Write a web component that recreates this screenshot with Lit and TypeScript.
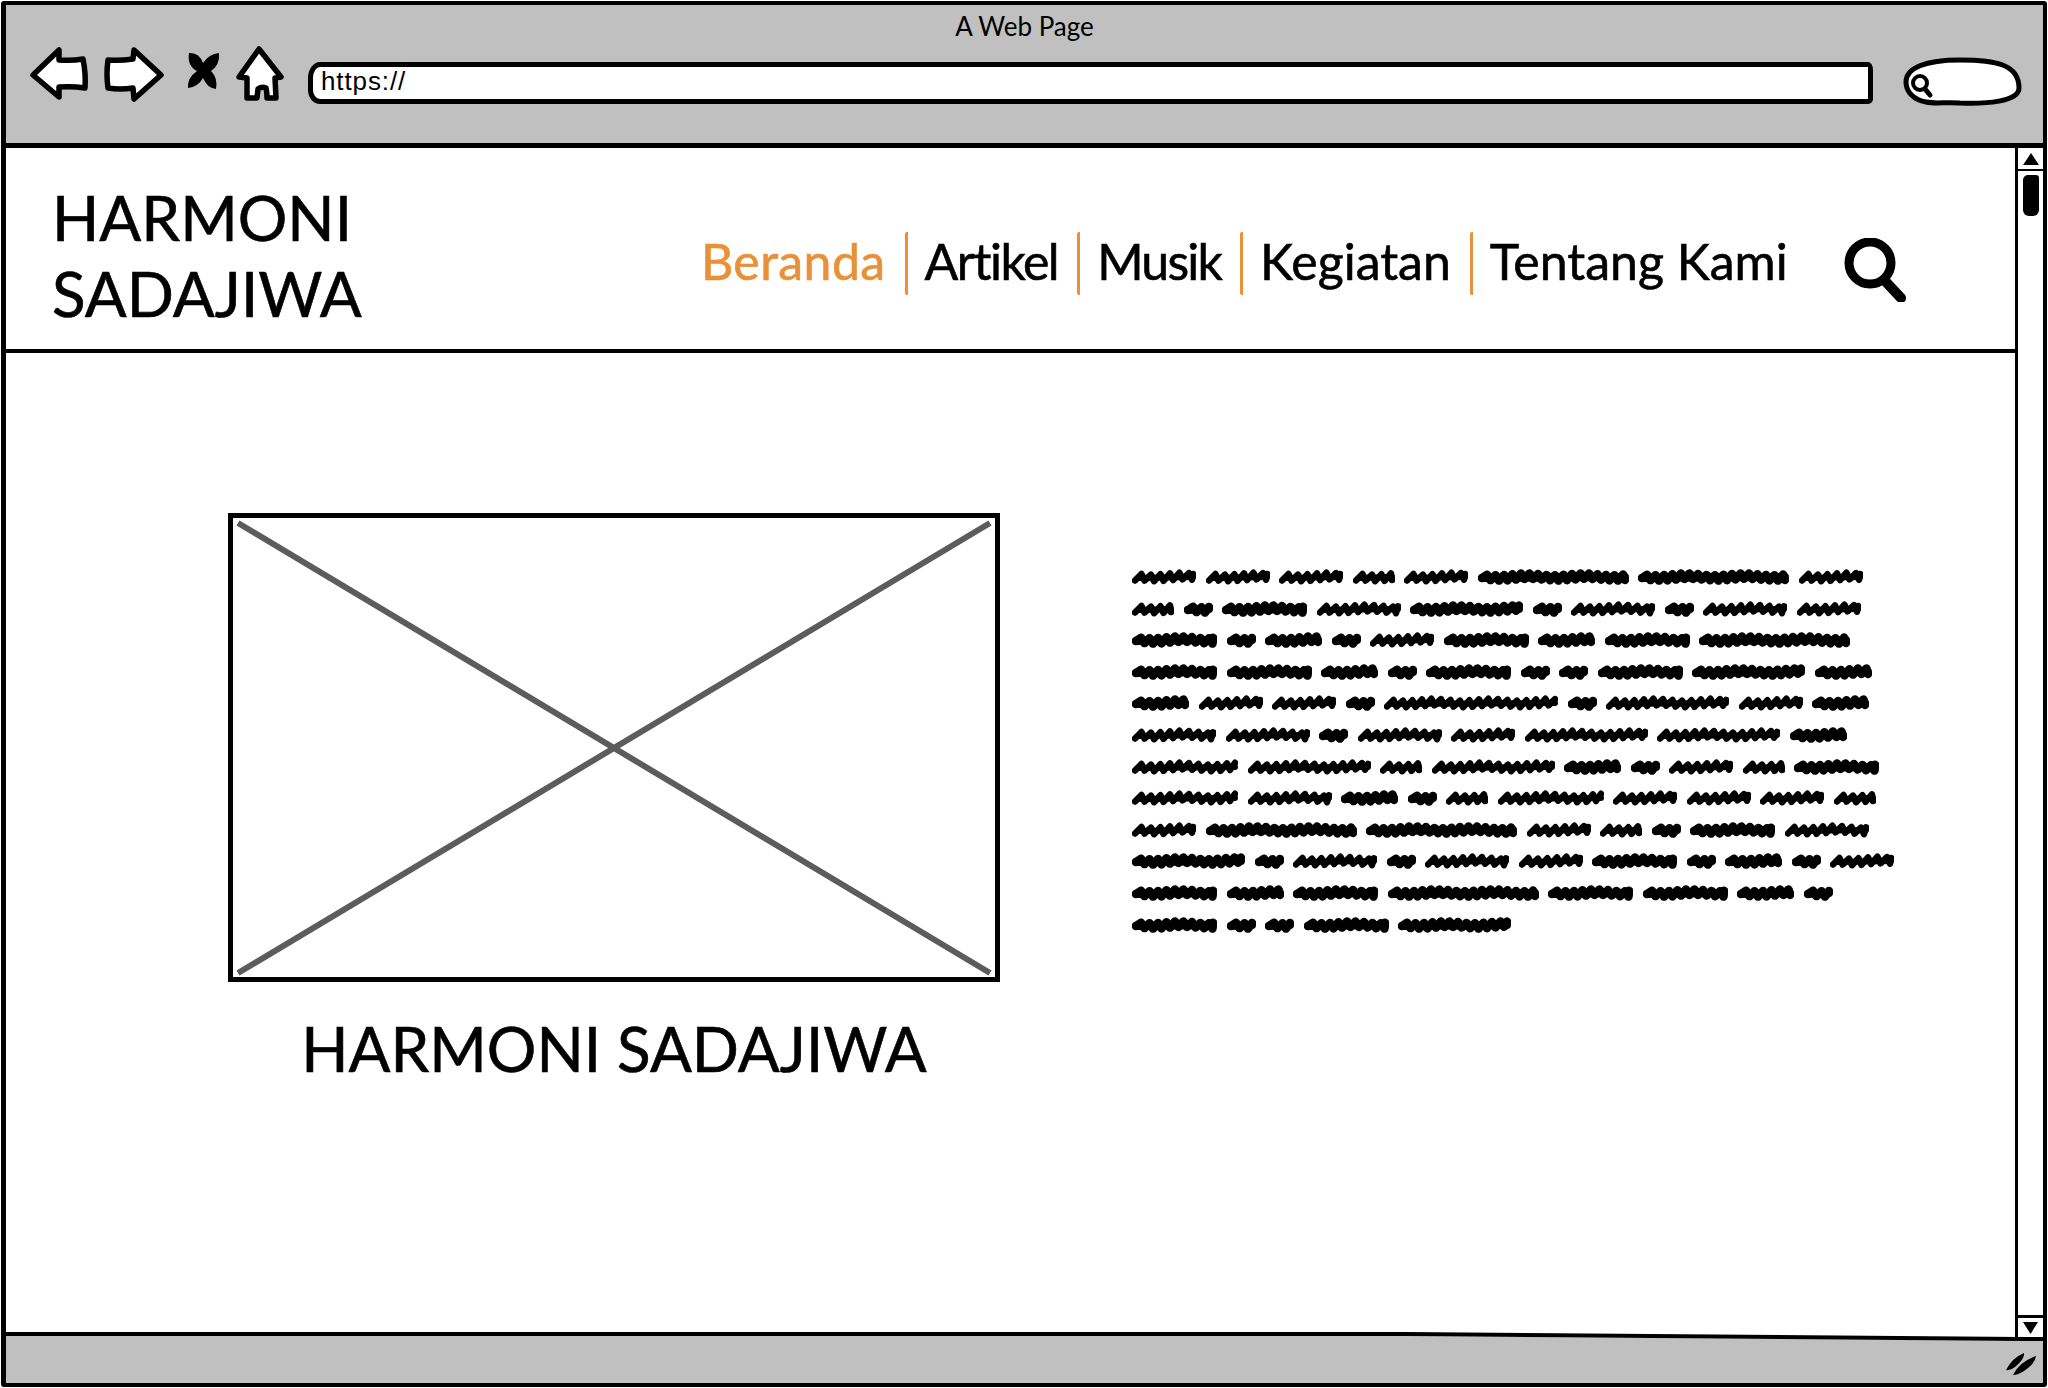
import { LitElement, html, css, svg } from 'lit';
import { customElement } from 'lit/decorators.js';

// scribble word kinds: [width, dense]
const KINDS: Record<string, [number, boolean]> = {
  a: [64, false],
  b: [42, false],
  c: [29, true],
  d: [85, true],
  e: [84, false],
  f: [57, true],
  g: [113, true],
  h: [151, true],
  i: [174, false],
  j: [123, false],
  k: [106, false],
};

const LINES = [
  'a a a b a h h a',
  'b c d e g c e c e a',
  'd c f c a d f d h',
  'd d f c d c c d g f',
  'f a a c i c j a f',
  'e e c e a j j f',
  'k j b j f c a b d',
  'k e f c b k a a a b',
  'a h h a b c d e',
  'g c e c e a d c f c a',
  'd f d h d d f c',
  'd c c d g',
];

function scribble(kind: string) {
  const [w, dense] = KINDS[kind];
  const rise = dense ? 5 : 6.5;
  const fall = dense ? 3.5 : 3;
  const amp = dense ? 2.2 : 2.8;
  const pts: string[] = [];
  let x = dense ? 4 : 3;
  const end = w - (dense ? 4 : 3);
  pts.push(`M${x} ${dense ? 9 : 11.5}`);
  while (x < end) {
    const bob = Math.sin(x * 0.11) * 0.9;
    x = Math.min(x + rise, end);
    pts.push(`L${x.toFixed(1)} ${(7.5 + bob - amp).toFixed(1)}`);
    if (x >= end) break;
    x = Math.min(x + fall, end);
    pts.push(`L${x.toFixed(1)} ${(8.5 + bob + amp).toFixed(1)}`);
  }
  const base = `M${dense ? 4 : 8} 9 L${end} 8`;
  return html`<svg class="word" width=${w} height="16" viewBox="0 0 ${w} 16">
    ${svg`<path d=${pts.join(' ')} fill="none" stroke="#000" stroke-width=${dense ? 8.5 : 6.5} stroke-linecap="round" stroke-linejoin="round"/>
    <path d=${base} fill="none" stroke="#000" stroke-width=${dense ? 8 : 6} stroke-linecap="round"/>`}
  </svg>`;
}

@customElement('app-root')
export class AppRoot extends LitElement {
  static styles = css`
    :host {
      display: block;
      width: 2048px;
      height: 1388px;
      padding: 1px;
      box-sizing: border-box;
      font-family: 'Lato', 'Noto Sans', sans-serif;
      color: #000;
      background: #fff;
      font-variant-ligatures: none;
    }
    .frame {
      height: 100%;
      box-sizing: border-box;
      border: 4px solid #000;
      border-left-width: 5px;
      display: flex;
      flex-direction: column;
      border-radius: 3px;
    }
    .bar {
      height: 143px;
      box-sizing: border-box;
      flex: none;
      background: #c0c0c0;
      border-bottom: 5px solid #000;
      padding-top: 6px;
    }
    .title {
      font-size: 26px;
      line-height: 30px;
      text-align: center;
      margin-bottom: 3px;
    }
    .tools {
      height: 74px;
      display: flex;
      align-items: center;
      padding: 0 21px 0 22px;
    }
    .tools svg {
      flex: none;
      height: 74px;
    }
    .back { margin-right: 13px; }
    .forward { margin-right: 20px; }
    .stop { margin-right: 14px; }
    .home { margin-right: 23px; }
    .url {
      flex: 1;
      height: 42px;
      align-self: flex-start;
      margin-top: 18px;
      box-sizing: border-box;
      background: #fff;
      border: 5px solid #000;
      border-radius: 12px 5px 5px 12px / 16px 8px 5px 14px;
      margin-right: 30px;
      padding-left: 8px;
      font-family: 'Liberation Sans', Arial, sans-serif;
      font-size: 26px;
      letter-spacing: 0.9px;
      line-height: 28px;
    }
    .content {
      flex: 1;
      display: flex;
      min-height: 0;
    }
    .main {
      flex: 1;
      min-width: 0;
    }
    .header {
      height: 205px;
      box-sizing: border-box;
      border-bottom: 4px solid #000;
      display: flex;
      align-items: flex-start;
    }
    .brand {
      width: 695px;
      box-sizing: border-box;
      padding: 31px 0 0 46px;
      font-size: 62px;
      line-height: 76px;
      flex: none;
      -webkit-text-stroke: 0.6px #000;
    }
    .nav {
      display: flex;
      margin-top: 84px;
      height: 63px;
      font-size: 50px;
      line-height: 58px;
      flex: none;
      -webkit-text-stroke: 0.6px currentColor;
    }
    .nav a {
      display: block;
      padding: 0 19px 0 17px;
      border-left: 3px solid #e99138;
      border-radius: 2px;
    }
    .nav a:first-child {
      border-left: none;
      padding-left: 0;
    }
    .nav a.active {
      color: #e99138;
      letter-spacing: 0.4px;
    }
    .nav a.artikel { letter-spacing: -1.5px; }
    .nav a.musik { letter-spacing: -1.8px; }
    .find {
      flex: none;
      margin: 90px 0 0 37px;
    }
    .body {
      display: flex;
      align-items: flex-start;
      padding: 160px 0 0 222px;
    }
    .figure {
      width: 772px;
      flex: none;
      text-align: center;
    }
    .placeholder {
      display: block;
      width: 772px;
      height: 469px;
    }
    .caption {
      margin-top: 28px;
      font-size: 62px;
      line-height: 76px;
      -webkit-text-stroke: 0.6px #000;
    }
    .para {
      margin: 56px 0 0 132px;
      display: flex;
      flex-direction: column;
      gap: 15.6px;
    }
    .line {
      display: flex;
      gap: 9.5px;
      height: 16px;
    }
    .word { flex: none; }
    .scroll {
      width: 28px;
      flex: none;
      box-sizing: border-box;
      border-left: 3px solid #000;
      display: flex;
      flex-direction: column;
      align-items: center;
    }
    .scroll-btn {
      width: 100%;
      height: 21px;
      flex: none;
      display: flex;
      align-items: center;
      justify-content: center;
    }
    .scroll-btn.up { border-bottom: 2px solid #000; }
    .scroll-btn.down {
      border-top: 3px solid #000;
      height: 22px;
      box-sizing: border-box;
      margin-top: auto;
      margin-bottom: -5px;
      position: relative;
      z-index: 1;
      background: #fff;
    }
    .thumb {
      width: 16px;
      height: 41px;
      margin-top: 4px;
      background: #000;
      border-radius: 5px 3px 6px 6px;
    }
    .rule {
      display: block;
      flex: none;
    }
    .status {
      flex: none;
      height: 42px;
      background: #c0c0c0;
      display: flex;
      justify-content: flex-end;
      align-items: flex-start;
      padding: 11px 5px 0 0;
      box-sizing: border-box;
    }
  `;

  render() {
    return html`
      <div class="frame">
        <div class="bar">
          <div class="title">A Web Page</div>
          <div class="tools">
            <svg class="back" width="62" viewBox="28 44 62 74">
              <path d="M33 75 L59 50 L59 60 Q72 61 83 59 Q86 74 85 88 Q72 86 59 87 L59 97 Z" fill="#fff" stroke="#000" stroke-width="5.5" stroke-linejoin="round"/>
            </svg>
            <svg class="forward" width="63" viewBox="103 44 63 74">
              <path d="M108 60 Q120 61 133 59 L134 50 L161 75 L134 99 L133 88 Q120 90 108 88 Q106 74 108 60 Z" fill="#fff" stroke="#000" stroke-width="5.5" stroke-linejoin="round"/>
            </svg>
            <svg class="stop" width="35" viewBox="186 44 35 74">
              <path d="M189 53 Q199 52 203 63 Q209 54 219 53 Q220 65 211 71 Q218 78 216 89 Q207 88 203 78 Q198 87 188 88 Q187 78 197 71 Q187 66 189 53 Z" fill="#000"/>
            </svg>
            <svg class="home" width="50" viewBox="235 44 50 74">
              <path d="M259 49 L281 77 L275 78 L276 98 L267 98 Q267 92 266 88 Q262 86 258 89 L257 98 L247 98 L247 78 L239 77 Z" fill="#fff" stroke="#000" stroke-width="5.5" stroke-linejoin="round"/>
            </svg>
            <div class="url">https://</div>
            <svg width="119" viewBox="1903 44 119 74">
              <path d="M1906 82 C1906 68 1925 60 1960 60 C1995 60 2019 64 2019 88 C2019 102 1985 104 1960 103 C1945 102 1935 104 1926 102 C1914 100 1906 92 1906 82 Z" fill="#fff" stroke="#000" stroke-width="5"/>
              <circle cx="1920" cy="83" r="7" fill="none" stroke="#000" stroke-width="4"/>
              <path d="M1925 89 L1930 95" stroke="#000" stroke-width="5" stroke-linecap="round"/>
            </svg>
          </div>
        </div>
        <div class="content">
          <div class="main">
            <div class="header">
              <div class="brand">HARMONI<br />SADAJIWA</div>
              <nav class="nav">
                <a class="active">Beranda</a>
                <a class="artikel">Artikel</a>
                <a class="musik">Musik</a>
                <a>Kegiatan</a>
                <a>Tentang Kami</a>
              </nav>
              <svg class="find" width="64" height="64" viewBox="0 0 64 64">
                <circle cx="26" cy="25" r="21" fill="none" stroke="#000" stroke-width="9"/>
                <path d="M42 44 L57 60" stroke="#000" stroke-width="10" stroke-linecap="round"/>
              </svg>
            </div>
            <div class="body">
              <div class="figure">
                <svg class="placeholder" viewBox="0 0 772 469">
                  <rect x="2.5" y="2.5" width="767" height="464" fill="#fff" stroke="#000" stroke-width="5"/>
                  <path d="M10 10 L762 460 M762 10 L10 460" stroke="#5c5c5c" stroke-width="6"/>
                </svg>
                <div class="caption">HARMONI SADAJIWA</div>
              </div>
              <div class="para">
                ${LINES.map(
                  (l) => html`<div class="line">${l.split(' ').map((k) => scribble(k))}</div>`,
                )}
              </div>
            </div>
          </div>
          <div class="scroll">
            <div class="scroll-btn up">
              <svg width="16" height="12" viewBox="0 0 16 12"><path d="M8 0 L16 12 L0 12 Z" fill="#000"/></svg>
            </div>
            <div class="thumb"></div>
            <div class="scroll-btn down">
              <svg width="15" height="12" viewBox="0 0 15 12"><path d="M0 0 L15 0 L7.5 12 Z" fill="#000"/></svg>
            </div>
          </div>
        </div>
        <svg class="rule" width="2037" height="9" viewBox="0 0 2037 9">
          <rect width="2037" height="9" fill="#fff"/>
          <path d="M0 4 L1400 4 L2037 9 L0 9 Z" fill="#c0c0c0"/>
          <path d="M2009 0 L2012 0 L2012 8 L2009 8 Z" fill="#000"/>
          <path d="M0 2 L1400 2 L2015 7 L2037 7" fill="none" stroke="#000" stroke-width="4"/>
        </svg>
        <div class="status">
          <svg width="34" height="26" viewBox="0 0 34 26">
            <path d="M2 18 Q8 6 20 1 Q21 7 11 15 Q6 19 2 18 Z M9 23 Q15 10 32 4 Q31 12 20 19 Q14 23 9 23 Z" fill="#000"/>
          </svg>
        </div>
      </div>
    `;
  }
}
